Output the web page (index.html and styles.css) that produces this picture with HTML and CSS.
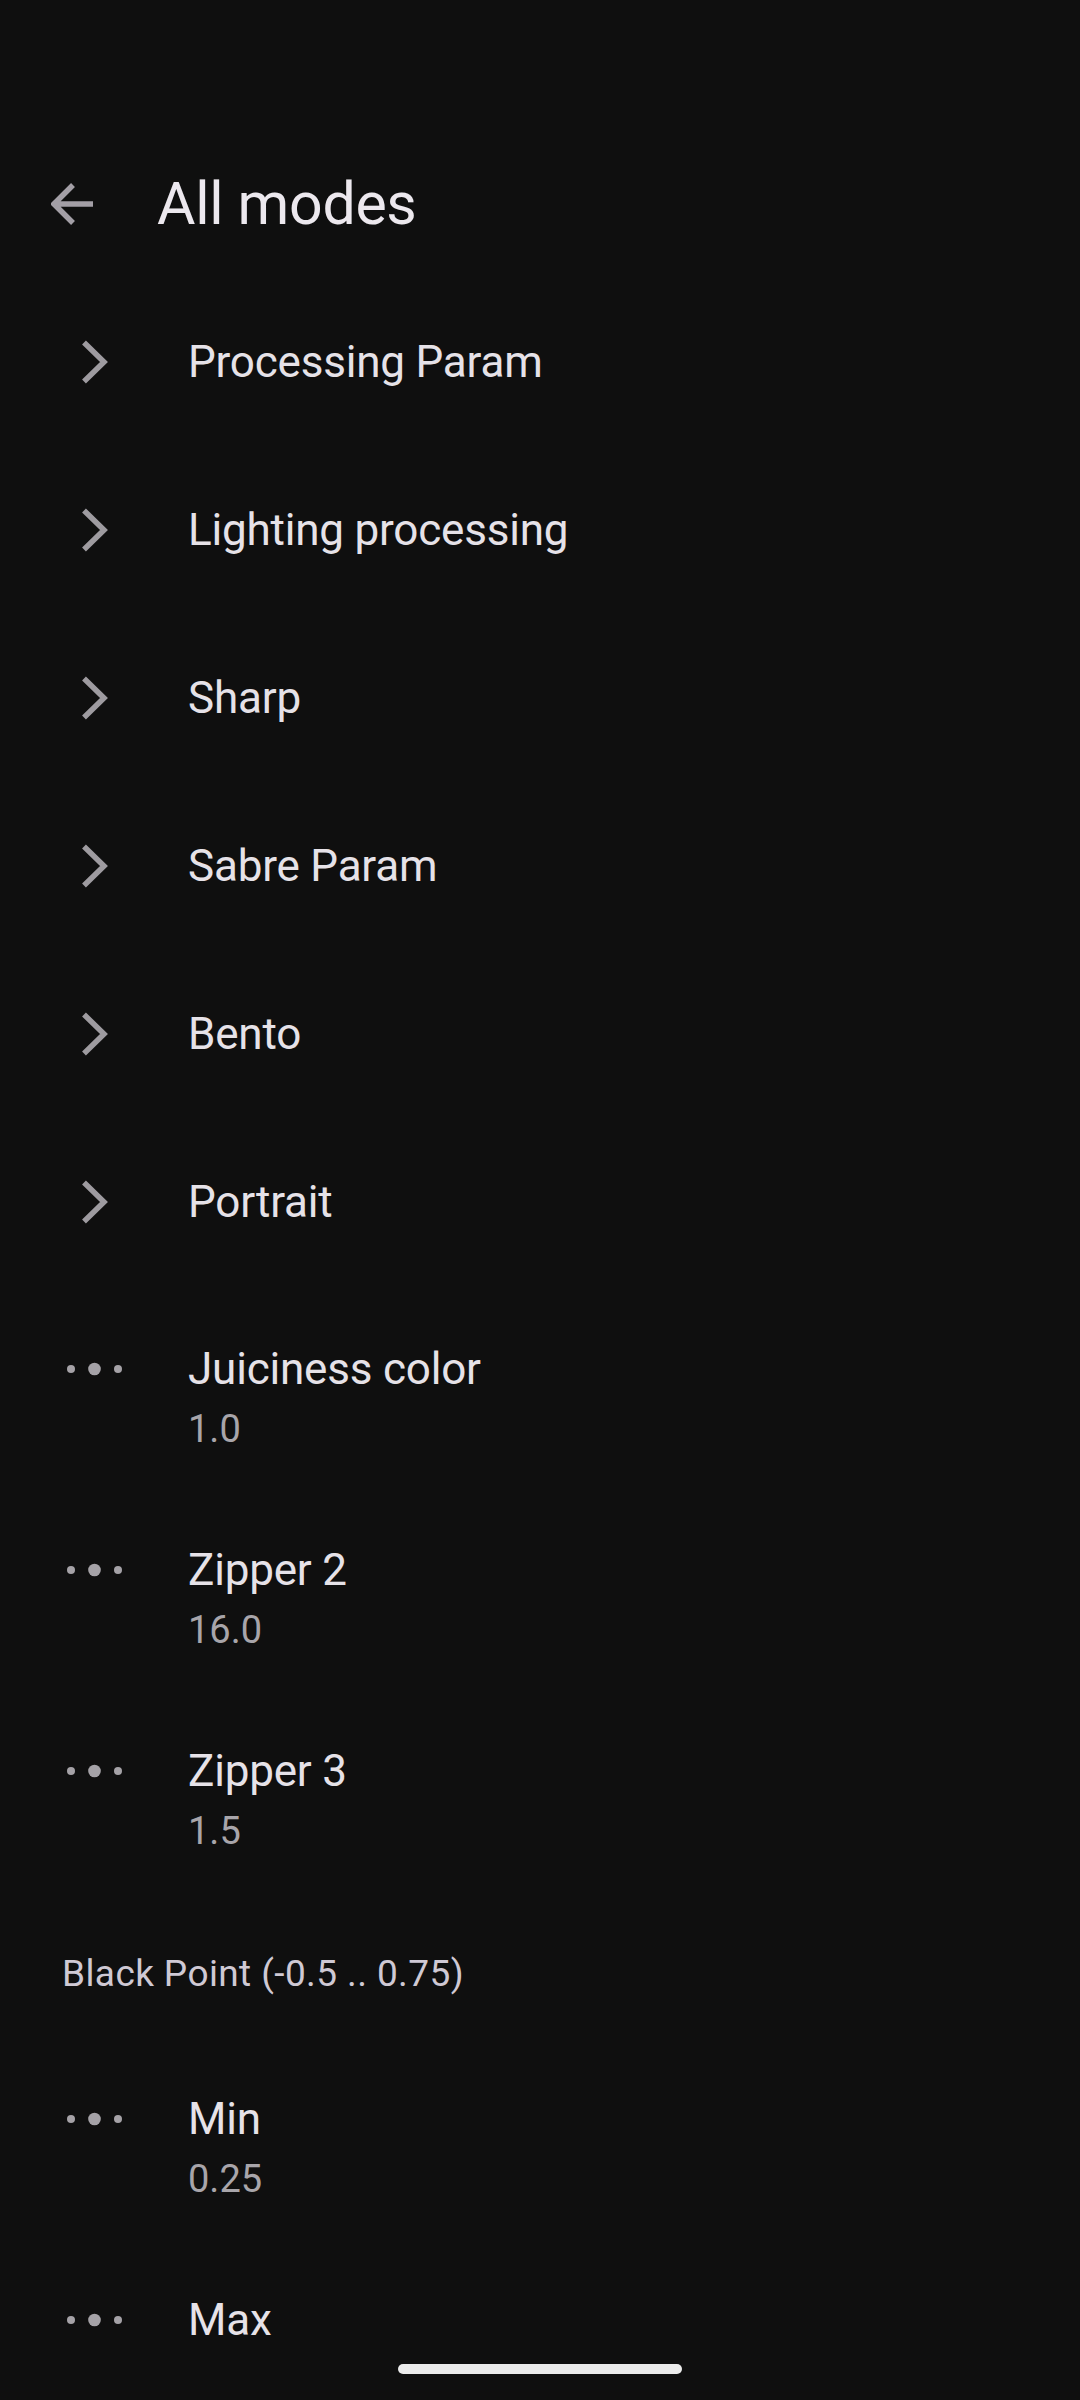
FILE: index.html
```html
<!DOCTYPE html>
<html lang="en">
<head>
    <meta charset="UTF-8">
    <meta name="viewport" content="width=device-width, initial-scale=1.0">
    <title>All modes</title>
    <link rel="stylesheet" href="styles.css">
</head>
<body>
    <div class="screen">
        <header class="top-bar">
            <button class="back-btn" aria-label="Back">
                <svg viewBox="0 0 44 44" width="44" height="44">
                    <path d="M3 22H42M22 3L3 22L22 41" fill="none" stroke="currentColor" stroke-width="5.5" stroke-linejoin="miter"/>
                </svg>
            </button>
            <h1>All modes</h1>
        </header>

        <ul class="pref-list">
            <li class="pref nav">
                <span class="pref-icon"><svg viewBox="0 0 28 44" width="28" height="44"><path d="M3 2.5L23 22L3 41.5" fill="none" stroke="currentColor" stroke-width="5.5"/></svg></span>
                <div class="pref-text"><div class="pref-title">Processing Param</div></div>
            </li>
            <li class="pref nav">
                <span class="pref-icon"><svg viewBox="0 0 28 44" width="28" height="44"><path d="M3 2.5L23 22L3 41.5" fill="none" stroke="currentColor" stroke-width="5.5"/></svg></span>
                <div class="pref-text"><div class="pref-title">Lighting processing</div></div>
            </li>
            <li class="pref nav">
                <span class="pref-icon"><svg viewBox="0 0 28 44" width="28" height="44"><path d="M3 2.5L23 22L3 41.5" fill="none" stroke="currentColor" stroke-width="5.5"/></svg></span>
                <div class="pref-text"><div class="pref-title">Sharp</div></div>
            </li>
            <li class="pref nav">
                <span class="pref-icon"><svg viewBox="0 0 28 44" width="28" height="44"><path d="M3 2.5L23 22L3 41.5" fill="none" stroke="currentColor" stroke-width="5.5"/></svg></span>
                <div class="pref-text"><div class="pref-title">Sabre Param</div></div>
            </li>
            <li class="pref nav">
                <span class="pref-icon"><svg viewBox="0 0 28 44" width="28" height="44"><path d="M3 2.5L23 22L3 41.5" fill="none" stroke="currentColor" stroke-width="5.5"/></svg></span>
                <div class="pref-text"><div class="pref-title">Bento</div></div>
            </li>
            <li class="pref nav">
                <span class="pref-icon"><svg viewBox="0 0 28 44" width="28" height="44"><path d="M3 2.5L23 22L3 41.5" fill="none" stroke="currentColor" stroke-width="5.5"/></svg></span>
                <div class="pref-text"><div class="pref-title">Portrait</div></div>
            </li>

            <li class="pref value">
                <span class="pref-icon dots"><svg viewBox="0 0 60 16" width="60" height="16"><circle cx="6" cy="8" r="4"/><circle cx="29.5" cy="8" r="6.3"/><circle cx="53" cy="8" r="4"/></svg></span>
                <div class="pref-text"><div class="pref-title">Juiciness color</div><div class="pref-summary">1.0</div></div>
            </li>
            <li class="pref value">
                <span class="pref-icon dots"><svg viewBox="0 0 60 16" width="60" height="16"><circle cx="6" cy="8" r="4"/><circle cx="29.5" cy="8" r="6.3"/><circle cx="53" cy="8" r="4"/></svg></span>
                <div class="pref-text"><div class="pref-title">Zipper 2</div><div class="pref-summary">16.0</div></div>
            </li>
            <li class="pref value">
                <span class="pref-icon dots"><svg viewBox="0 0 60 16" width="60" height="16"><circle cx="6" cy="8" r="4"/><circle cx="29.5" cy="8" r="6.3"/><circle cx="53" cy="8" r="4"/></svg></span>
                <div class="pref-text"><div class="pref-title">Zipper 3</div><div class="pref-summary">1.5</div></div>
            </li>

            <li class="pref-category">Black Point (-0.5 .. 0.75)</li>

            <li class="pref value">
                <span class="pref-icon dots"><svg viewBox="0 0 60 16" width="60" height="16"><circle cx="6" cy="8" r="4"/><circle cx="29.5" cy="8" r="6.3"/><circle cx="53" cy="8" r="4"/></svg></span>
                <div class="pref-text"><div class="pref-title">Min</div><div class="pref-summary">0.25</div></div>
            </li>
            <li class="pref value">
                <span class="pref-icon dots"><svg viewBox="0 0 60 16" width="60" height="16"><circle cx="6" cy="8" r="4"/><circle cx="29.5" cy="8" r="6.3"/><circle cx="53" cy="8" r="4"/></svg></span>
                <div class="pref-text"><div class="pref-title">Max</div></div>
            </li>
        </ul>
    </div>

    <div class="home-bar"></div>
</body>
</html>
```

FILE: styles.css
```css
* {
    margin: 0;
    padding: 0;
    box-sizing: border-box;
}

html, body {
    height: 100%;
    overflow: hidden;
}

body {
    font-family: Roboto, 'Noto Sans', sans-serif;
    background: #0f0f0f;
    color: #e6e2e8;
}

.screen {
    padding-top: 130px;
}

/* Top app bar */
.top-bar {
    height: 148px;
    display: flex;
    align-items: center;
    padding-left: 51px;
}

.back-btn {
    background: none;
    border: none;
    color: #a39fa6;
    width: 44px;
    height: 44px;
    display: flex;
    margin-right: 62px;
}

h1 {
    font-size: 59px;
    font-weight: 400;
    line-height: 70px;
    color: #ece8ee;
    letter-spacing: -0.3px;
}

/* Preference rows */
.pref-list {
    list-style: none;
}

.pref {
    display: flex;
    align-items: flex-start;
}

.pref.nav {
    padding: 54px 0;
}

.pref.value {
    padding: 53px 0 32px;
}

.pref-icon {
    width: 188px;
    height: 60px;
    display: flex;
    align-items: center;
    flex-shrink: 0;
}

.pref.nav .pref-icon {
    padding-left: 81px;
    color: #9e9ba0;
}

.pref-icon.dots {
    padding-left: 65px;
    fill: #a5a2a7;
}

.pref-title {
    font-size: 44px;
    line-height: 60px;
    letter-spacing: -0.2px;
    color: #e6e2e8;
}

.pref-summary {
    font-size: 38px;
    line-height: 52px;
    margin-top: 4px;
    color: #a8a5aa;
}

.pref-category {
    font-size: 37px;
    line-height: 50px;
    letter-spacing: 0.4px;
    color: #cfc9d4;
    padding: 60px 0 37px 62px;
}

/* Gesture nav handle */
.home-bar {
    position: fixed;
    left: 398px;
    bottom: 26px;
    width: 284px;
    height: 10px;
    border-radius: 5px;
    background: #ebebeb;
}
```
